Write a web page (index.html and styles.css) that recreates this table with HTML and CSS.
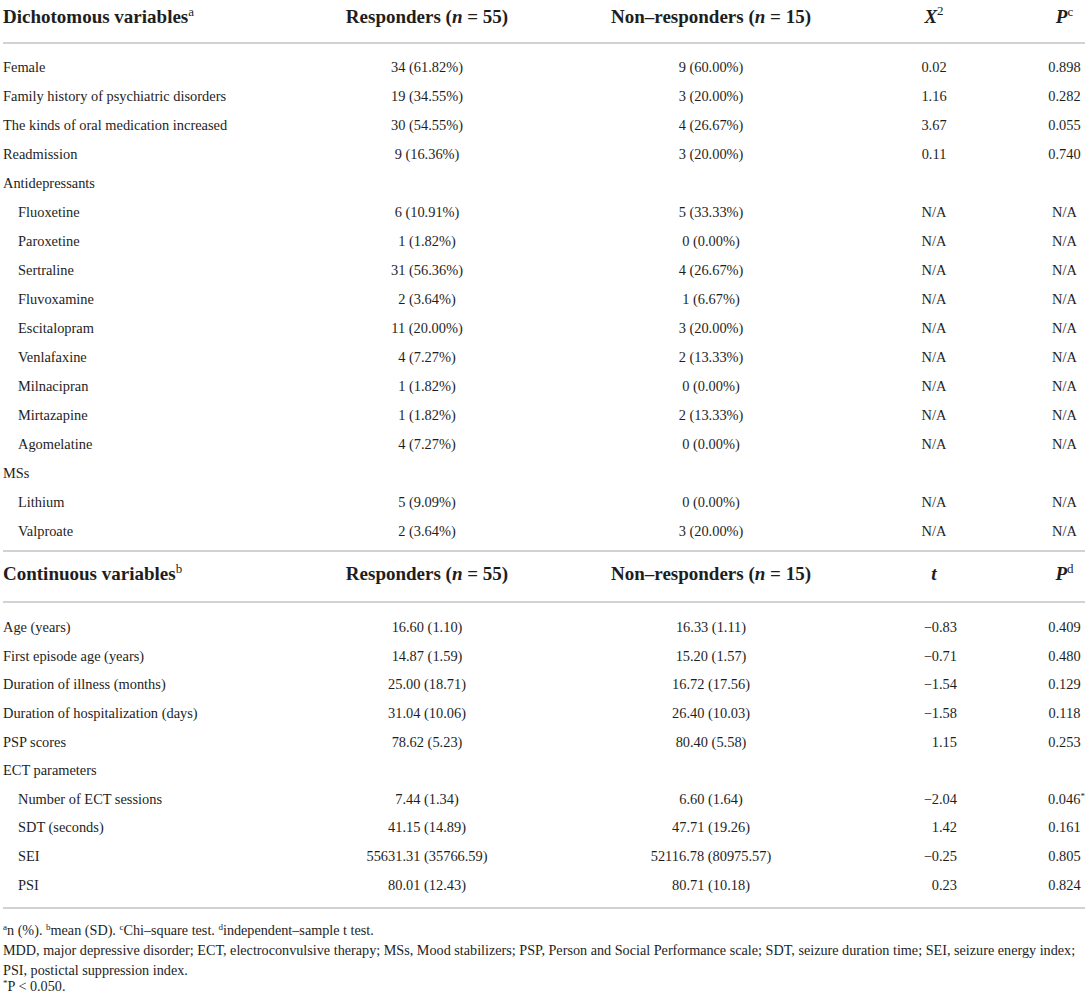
FILE: index.html
```html
<!DOCTYPE html>
<html lang="en">
<head>
<meta charset="utf-8">
<title>Table</title>
<link rel="stylesheet" href="styles.css">
</head>
<body>
<div class="page">
  <div class="thead">
    <div class="row head">
      <div class="c1">Dichotomous variables<sup class="hs">a</sup></div>
      <div class="c2">Responders (<i>n</i> = 55)</div>
      <div class="c3">Non–responders (<i>n</i> = 15)</div>
      <div class="c4"><i>X</i><sup class="hs2">2</sup></div>
      <div class="c5"><i>P</i><sup class="hs">c</sup></div>
    </div>
  </div>
  <div class="tbody first">
    <div class="row"><div class="c1">Female</div><div class="c2">34 (61.82%)</div><div class="c3">9 (60.00%)</div><div class="c4">0.02</div><div class="c5">0.898</div></div>
    <div class="row"><div class="c1">Family history of psychiatric disorders</div><div class="c2">19 (34.55%)</div><div class="c3">3 (20.00%)</div><div class="c4">1.16</div><div class="c5">0.282</div></div>
    <div class="row"><div class="c1">The kinds of oral medication increased</div><div class="c2">30 (54.55%)</div><div class="c3">4 (26.67%)</div><div class="c4">3.67</div><div class="c5">0.055</div></div>
    <div class="row"><div class="c1">Readmission</div><div class="c2">9 (16.36%)</div><div class="c3">3 (20.00%)</div><div class="c4">0.11</div><div class="c5">0.740</div></div>
    <div class="row"><div class="c1">Antidepressants</div><div class="c2"></div><div class="c3"></div><div class="c4"></div><div class="c5"></div></div>
    <div class="row"><div class="c1 ind">Fluoxetine</div><div class="c2">6 (10.91%)</div><div class="c3">5 (33.33%)</div><div class="c4">N/A</div><div class="c5">N/A</div></div>
    <div class="row"><div class="c1 ind">Paroxetine</div><div class="c2">1 (1.82%)</div><div class="c3">0 (0.00%)</div><div class="c4">N/A</div><div class="c5">N/A</div></div>
    <div class="row"><div class="c1 ind">Sertraline</div><div class="c2">31 (56.36%)</div><div class="c3">4 (26.67%)</div><div class="c4">N/A</div><div class="c5">N/A</div></div>
    <div class="row"><div class="c1 ind">Fluvoxamine</div><div class="c2">2 (3.64%)</div><div class="c3">1 (6.67%)</div><div class="c4">N/A</div><div class="c5">N/A</div></div>
    <div class="row"><div class="c1 ind">Escitalopram</div><div class="c2">11 (20.00%)</div><div class="c3">3 (20.00%)</div><div class="c4">N/A</div><div class="c5">N/A</div></div>
    <div class="row"><div class="c1 ind">Venlafaxine</div><div class="c2">4 (7.27%)</div><div class="c3">2 (13.33%)</div><div class="c4">N/A</div><div class="c5">N/A</div></div>
    <div class="row"><div class="c1 ind">Milnacipran</div><div class="c2">1 (1.82%)</div><div class="c3">0 (0.00%)</div><div class="c4">N/A</div><div class="c5">N/A</div></div>
    <div class="row"><div class="c1 ind">Mirtazapine</div><div class="c2">1 (1.82%)</div><div class="c3">2 (13.33%)</div><div class="c4">N/A</div><div class="c5">N/A</div></div>
    <div class="row"><div class="c1 ind">Agomelatine</div><div class="c2">4 (7.27%)</div><div class="c3">0 (0.00%)</div><div class="c4">N/A</div><div class="c5">N/A</div></div>
    <div class="row"><div class="c1">MSs</div><div class="c2"></div><div class="c3"></div><div class="c4"></div><div class="c5"></div></div>
    <div class="row"><div class="c1 ind">Lithium</div><div class="c2">5 (9.09%)</div><div class="c3">0 (0.00%)</div><div class="c4">N/A</div><div class="c5">N/A</div></div>
    <div class="row"><div class="c1 ind">Valproate</div><div class="c2">2 (3.64%)</div><div class="c3">3 (20.00%)</div><div class="c4">N/A</div><div class="c5">N/A</div></div>
  </div>
  <div class="thead second">
    <div class="row head">
      <div class="c1">Continuous variables<sup class="hs">b</sup></div>
      <div class="c2">Responders (<i>n</i> = 55)</div>
      <div class="c3">Non–responders (<i>n</i> = 15)</div>
      <div class="c4"><i>t</i></div>
      <div class="c5"><i>P</i><sup class="hs">d</sup></div>
    </div>
  </div>
  <div class="tbody last">
    <div class="row r2"><div class="c1">Age (years)</div><div class="c2">16.60 (1.10)</div><div class="c3">16.33 (1.11)</div><div class="c4 num">−0.83</div><div class="c5">0.409</div></div>
    <div class="row r2"><div class="c1">First episode age (years)</div><div class="c2">14.87 (1.59)</div><div class="c3">15.20 (1.57)</div><div class="c4 num">−0.71</div><div class="c5">0.480</div></div>
    <div class="row r2"><div class="c1">Duration of illness (months)</div><div class="c2">25.00 (18.71)</div><div class="c3">16.72 (17.56)</div><div class="c4 num">−1.54</div><div class="c5">0.129</div></div>
    <div class="row r2"><div class="c1">Duration of hospitalization (days)</div><div class="c2">31.04 (10.06)</div><div class="c3">26.40 (10.03)</div><div class="c4 num">−1.58</div><div class="c5">0.118</div></div>
    <div class="row r2"><div class="c1">PSP scores</div><div class="c2">78.62 (5.23)</div><div class="c3">80.40 (5.58)</div><div class="c4 num">1.15</div><div class="c5">0.253</div></div>
    <div class="row r2"><div class="c1">ECT parameters</div><div class="c2"></div><div class="c3"></div><div class="c4"></div><div class="c5"></div></div>
    <div class="row r2"><div class="c1 ind">Number of ECT sessions</div><div class="c2">7.44 (1.34)</div><div class="c3">6.60 (1.64)</div><div class="c4 num">−2.04</div><div class="c5 star">0.046<sup class="ast">*</sup></div></div>
    <div class="row r2"><div class="c1 ind">SDT (seconds)</div><div class="c2">41.15 (14.89)</div><div class="c3">47.71 (19.26)</div><div class="c4 num">1.42</div><div class="c5">0.161</div></div>
    <div class="row r2"><div class="c1 ind">SEI</div><div class="c2">55631.31 (35766.59)</div><div class="c3">52116.78 (80975.57)</div><div class="c4 num">−0.25</div><div class="c5">0.805</div></div>
    <div class="row r2"><div class="c1 ind">PSI</div><div class="c2">80.01 (12.43)</div><div class="c3">80.71 (10.18)</div><div class="c4 num">0.23</div><div class="c5">0.824</div></div>
  </div>
  <div class="notes">
    <p><sup>a</sup>n (%). <sup>b</sup>mean (SD). <sup>c</sup>Chi–square test. <sup>d</sup>independent–sample t test.</p>
    <p>MDD, major depressive disorder; ECT, electroconvulsive therapy; MSs, Mood stabilizers; PSP, Person and Social Performance scale; SDT, seizure duration time; SEI, seizure energy index; PSI, postictal suppression index.</p>
    <p class="last-note"><sup>*</sup>P &lt; 0.050.</p>
  </div>
</div>
</body>
</html>
```
FILE: styles.css
```css
html, body {
  margin: 0;
  padding: 0;
  background: #ffffff;
}
body {
  font-family: "Liberation Serif", "Times New Roman", serif;
  color: #1e1e1e;
  font-size: 14.4px;
}
.page {
  width: 1082px;
  margin-left: 3px;
}
.row {
  display: grid;
  grid-template-columns: 277px 294px 274px 172px 65px;
  height: 29px;
  align-items: center;
  line-height: 18px;
}
.row.r2 {
  height: 28.6px;
}
.row > div {
  text-align: center;
  white-space: nowrap;
}
.row > .c1 {
  text-align: left;
}
.row > .c5 {
  padding-left: 24px;
}
.row > .ind {
  padding-left: 15px;
}
.row > .num {
  text-align: right;
  padding-right: 63px;
}
.star .ast {
  font-size: 9px;
  vertical-align: 5px;
  line-height: 0;
  margin-right: -4px;
}
.thead {
  border-bottom: 2px solid #d2d2d2;
}
.row.head {
  height: auto;
  font-size: 19px;
  font-weight: bold;
  line-height: 22px;
  padding-top: 6px;
  padding-bottom: 14px;
}
.thead.second .row.head {
  padding-top: 11px;
  padding-bottom: 16px;
}
.tbody {
  border-bottom: 2px solid #d2d2d2;
}
.tbody.first {
  padding-top: 8px;
  padding-bottom: 5px;
}
.tbody.last {
  padding-top: 10px;
  padding-bottom: 8px;
}
.hs {
  font-size: 13px;
  font-weight: normal;
  vertical-align: 7px;
  line-height: 0;
}
.hs2 {
  font-size: 13px;
  font-weight: normal;
  vertical-align: 8px;
  line-height: 0;
}
.notes {
  padding-top: 11px;
  font-size: 14.2px;
  line-height: 20px;
}
.notes p {
  margin: 0;
}
.notes .last-note {
  line-height: 14px;
  margin-top: -1px;
}
.notes sup {
  font-size: 9px;
  vertical-align: 5px;
  line-height: 0;
}
```
